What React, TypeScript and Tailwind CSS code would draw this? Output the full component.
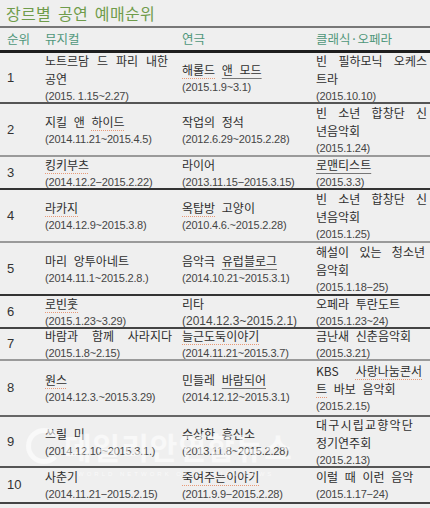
import React from "react";

type Cell = { lines: React.ReactNode[]; date: string; dateBig?: boolean };
type Row = { n: string; h: string; b: string; cells: Cell[] };

const U = ({ children }: { children: React.ReactNode }) => (
  <span className="underline decoration-dotted decoration-[#e89a78] decoration-1 underline-offset-[3px]">{children}</span>
);
const G = ({ children }: { children: React.ReactNode }) => (
  <span className="underline decoration-[#777] decoration-1 underline-offset-[3px]">{children}</span>
);

const J = ({ w, children }: { w: string; children: React.ReactNode }) => (
  <div className={`${w} text-justify [text-align-last:justify] whitespace-nowrap`}>{children}</div>
);

const rows: Row[] = [
  {
    n: "1", h: "h-[51px]", b: "border-[#555]",
    cells: [
      { lines: [<J w="w-[123px]">노트르담 드 파리 내한</J>, "공연"], date: "(2015. 1.15~2.27)" },
      { lines: [<><U>해롤드</U> <G>앤 모드</G></>], date: "(2015.1.9~3.1)" },
      { lines: [<J w="w-[111px]">빈 필하모닉 오케스</J>, "트라"], date: "(2015.10.10)" },
    ],
  },
  {
    n: "2", h: "h-[53px]", b: "border-[#9a9a9a]",
    cells: [
      { lines: [<>지킬 앤 <U>하이드</U></>], date: "(2014.11.21~2015.4.5)" },
      { lines: ["작업의 정석"], date: "(2012.6.29~2015.2.28)" },
      { lines: [<J w="w-[111px]">빈 소년 합창단 신</J>, "년음악회"], date: "(2015.1.24)" },
    ],
  },
  {
    n: "3", h: "h-[33px]", b: "border-[#333]",
    cells: [
      { lines: [<U>킹키부츠</U>], date: "(2014.12.2−2015.2.22)" },
      { lines: ["라이어"], date: "(2013.11.15−2015.3.15)" },
      { lines: [<G>로맨티스트</G>], date: "(2015.3.3)" },
    ],
  },
  {
    n: "4", h: "h-[53px]", b: "border-[#9a9a9a]",
    cells: [
      { lines: [<U>라카지</U>], date: "(2014.12.9~2015.3.8)" },
      { lines: [<><U>옥탑방</U> 고양이</>], date: "(2010.4.6.~2015.2.28)" },
      { lines: [<J w="w-[111px]">빈 소년 합창단 신</J>, "년음악회"], date: "(2015.1.25)" },
    ],
  },
  {
    n: "5", h: "h-[53px]", b: "border-[#333]",
    cells: [
      { lines: ["마리 앙투아네트"], date: "(2014.11.1~2015.2.8.)" },
      { lines: [<>음악극 <G>유럽블로그</G></>], date: "(2014.10.21~2015.3.1)" },
      { lines: [<J w="w-[109px]">해설이 있는 청소년</J>, "음악회"], date: "(2015.1.18−25)" },
    ],
  },
  {
    n: "6", h: "h-[33px]", b: "border-[#444]",
    cells: [
      { lines: [<U>로빈훗</U>], date: "(2015.1.23~3.29)" },
      { lines: ["리타"], date: "(2014.12.3~2015.2.1)", dateBig: true },
      { lines: ["오페라 투란도트"], date: "(2015.1.23~24)" },
    ],
  },
  {
    n: "7", h: "h-[32px]", b: "border-[#9a9a9a]",
    cells: [
      { lines: [<J w="w-[127px]">바람과 함께 사라지다</J>], date: "(2015.1.8~2.15)" },
      { lines: [<U>늘근도둑이야기</U>], date: "(2014.11.21~2015.3.7)" },
      { lines: ["금난새 신춘음악회"], date: "(2015.3.21)" },
    ],
  },
  {
    n: "8", h: "h-[56px]", b: "border-[#666]",
    cells: [
      { lines: [<U>원스</U>], date: "(2014.12.3.~2015.3.29)" },
      { lines: [<>민들레 <G>바람되어</G></>], date: "(2014.12.12~2015.3.1)" },
      { lines: [<J w="w-[106px]">KBS <U>사랑나눔콘서</U></J>, <><U>트</U> 바보 음악회</>], date: "(2015.2.15)" },
    ],
  },
  {
    n: "9", h: "h-[51px]", b: "border-[#555]",
    cells: [
      { lines: ["쓰릴 미"], date: "(2014.12.10~2015.3.1.)" },
      { lines: ["수상한 흥신소"], date: "(2013.11.8~2015.2.28)" },
      { lines: [<span className="tracking-[1.2px]">대구시립교향악단</span>, "정기연주회"], date: "(2015.2.13)" },
    ],
  },
  {
    n: "10", h: "h-[36px]", b: "border-[#444]",
    cells: [
      { lines: ["사춘기"], date: "(2014.11.21−2015.2.15)" },
      { lines: [<U>죽여주는이야기</U>], date: "(2011.9.9−2015.2.28)" },
      { lines: ["이럴 때 이런 음악"], date: "(2015.1.17−24)" },
    ],
  },
];

const cols = ["w-[42px]", "w-[138px]", "w-[133px]", "w-[117px]"];

export default function App() {
  return (
    <div className="relative w-[430px] h-[508px] overflow-hidden bg-[#efefef] font-['Noto_Sans_CJK_KR',sans-serif] text-[#333]">
      <div className="h-[26px] pl-[6px] flex items-center text-[16px] leading-none text-[#6f9c4b] tracking-[0.3px] [word-spacing:3px]">
        장르별 공연 예매순위
      </div>
      <div className="flex h-[27px] border-t-2 border-b-[3px] border-[#777] border-b-[#1e1e1e] text-[12.5px] text-[#4f977b] items-center [word-spacing:3px]">
        <div className={`${cols[0]} pl-[7px]`}>순위</div>
        <div className={`${cols[1]} pl-[3px]`}>뮤지컬</div>
        <div className={`${cols[2]} pl-[2px]`}>연극</div>
        <div className={`${cols[3]} pl-[3px]`}>클래식·오페라</div>
      </div>
      {rows.map((r) => (
        <div key={r.n} className={`flex ${r.h} border-b-2 ${r.b}`}>
          <div className={`${cols[0]} pl-[7px] flex items-center font-['Liberation_Sans',sans-serif] text-[13px] text-[#333]`}>
            {r.n}
          </div>
          {r.cells.map((c, i) => (
            <div
              key={i}
              className={`${cols[i + 1]} ${i === 1 ? "pl-[2px]" : "pl-[3px]"} flex flex-col justify-center`}
            >
              {c.lines.map((l, k) => (
                <div key={k} className="text-[12px] leading-[18px] whitespace-nowrap [word-spacing:4px] text-[#2e2e2e]">
                  {l}
                </div>
              ))}
              <div
                className={`font-['Liberation_Sans',sans-serif] whitespace-nowrap text-[#454545] ${
                  c.dateBig ? "text-[12px] leading-[16px]" : "text-[11px] leading-[16px] tracking-[-0.2px]"
                }`}
              >
                {c.date}
              </div>
            </div>
          ))}
        </div>
      ))}
      <div className="absolute left-[26px] top-[428px] pointer-events-none select-none">
        <div className="flex items-center gap-[2px]">
          <div className="w-[36px] h-[36px] rounded-full border-[5px] border-white/60 border-r-transparent" />
          <div className="text-[30px] leading-none font-bold text-white/55 tracking-[1px]">데일리안연합뉴스</div>
        </div>
        <div className="ml-[52px] mt-[6px] font-['Liberation_Sans',sans-serif] text-[6px] tracking-[3px] text-white/60 whitespace-nowrap">
          WORLD NETWORK OF DAILIAN NEWS
        </div>
      </div>
    </div>
  );
}
